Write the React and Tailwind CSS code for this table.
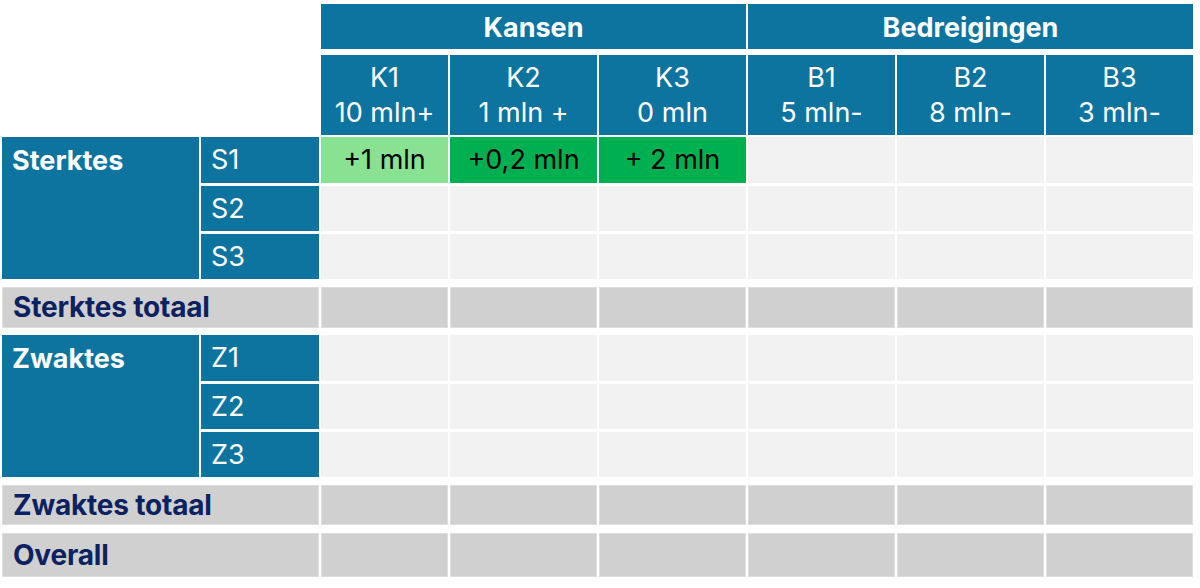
import React from "react";

const COLS = "grid grid-cols-[197px_118px_127px_147px_147px_147px_147px_147px] gap-x-[2px]";
const FONT = { fontFamily: "Inter, 'Noto Sans', sans-serif" };

function Blue({ className = "", children }) {
  return <div className={`bg-[#0d74a0] text-white ${className}`}>{children}</div>;
}

function Light({ className = "", children }) {
  return <div className={`bg-[#f2f2f2] flex items-center justify-center text-black text-[27px] leading-[32px] ${className}`}>{children}</div>;
}

function Gray() {
  return <div className="bg-[#d0d0d0] border border-[#dedede]" />;
}

function GroupBand({ title, codes, first }) {
  return (
    <div className={`${COLS} grid-rows-[46px_45px_45px] gap-y-[3px]`}>
      <Blue className="row-span-3 pl-[10px] pt-[6px] text-[27px] font-bold leading-[36px]">{title}</Blue>
      {codes.map((c, i) => (
        <React.Fragment key={c}>
          <Blue className="flex items-center pl-[10px] text-[27px] leading-[32px]">{c}</Blue>
          {i === 0 && first ? (
            <>
              <Light className="!bg-[#89e291]">+1 mln</Light>
              <Light className="!bg-[#00b050]">+0,2 mln</Light>
              <Light className="!bg-[#00b050]">+ 2 mln</Light>
            </>
          ) : (
            <>
              <Light />
              <Light />
              <Light />
            </>
          )}
          <Light />
          <Light />
          <Light />
        </React.Fragment>
      ))}
    </div>
  );
}

function TotalRow({ label, h, className = "" }) {
  return (
    <div className={`${COLS} ${h} ${className}`}>
      <div className="col-span-2 bg-[#d0d0d0] border border-[#dedede] flex items-center pl-[10px] pb-[1px] text-[#0c2160] text-[28px] leading-[30px] font-bold tracking-[-0.2px]">
        {label}
      </div>
      <Gray />
      <Gray />
      <Gray />
      <Gray />
      <Gray />
      <Gray />
    </div>
  );
}

export default function App() {
  const sub = [
    ["K1", "10 mln+"],
    ["K2", "1 mln +"],
    ["K3", "0 mln"],
    ["B1", "5 mln-"],
    ["B2", "8 mln-"],
    ["B3", "3 mln-"],
  ];
  return (
    <div className="w-[1200px] h-[588px] bg-white pt-[4px] pl-[2px] flex flex-col" style={FONT}>
      <div className={`${COLS} grid-rows-[45px_80px] gap-y-[6px]`}>
        <div className="row-span-2" />
        <div className="row-span-2" />
        <Blue className="col-span-3 flex items-center justify-center pt-[3px] text-[27px] leading-[32px] font-bold">Kansen</Blue>
        <Blue className="col-span-3 flex items-center justify-center pt-[3px] text-[27px] leading-[32px] font-bold">Bedreigingen</Blue>
        {sub.map(([a, b]) => (
          <Blue key={a} className="flex flex-col items-center justify-center text-[27px] leading-[35px]">
            <span>{a}</span>
            <span>{b}</span>
          </Blue>
        ))}
      </div>
      <div className="mt-[2px]">
        <GroupBand title="Sterktes" codes={["S1", "S2", "S3"]} first />
      </div>
      <TotalRow label="Sterktes totaal" h="h-[41px]" className="mt-[8px]" />
      <div className="mt-[7px]">
        <GroupBand title="Zwaktes" codes={["Z1", "Z2", "Z3"]} />
      </div>
      <TotalRow label="Zwaktes totaal" h="h-[40px]" className="mt-[8px]" />
      <TotalRow label="Overall" h="h-[44px]" className="mt-[8px]" />
    </div>
  );
}
